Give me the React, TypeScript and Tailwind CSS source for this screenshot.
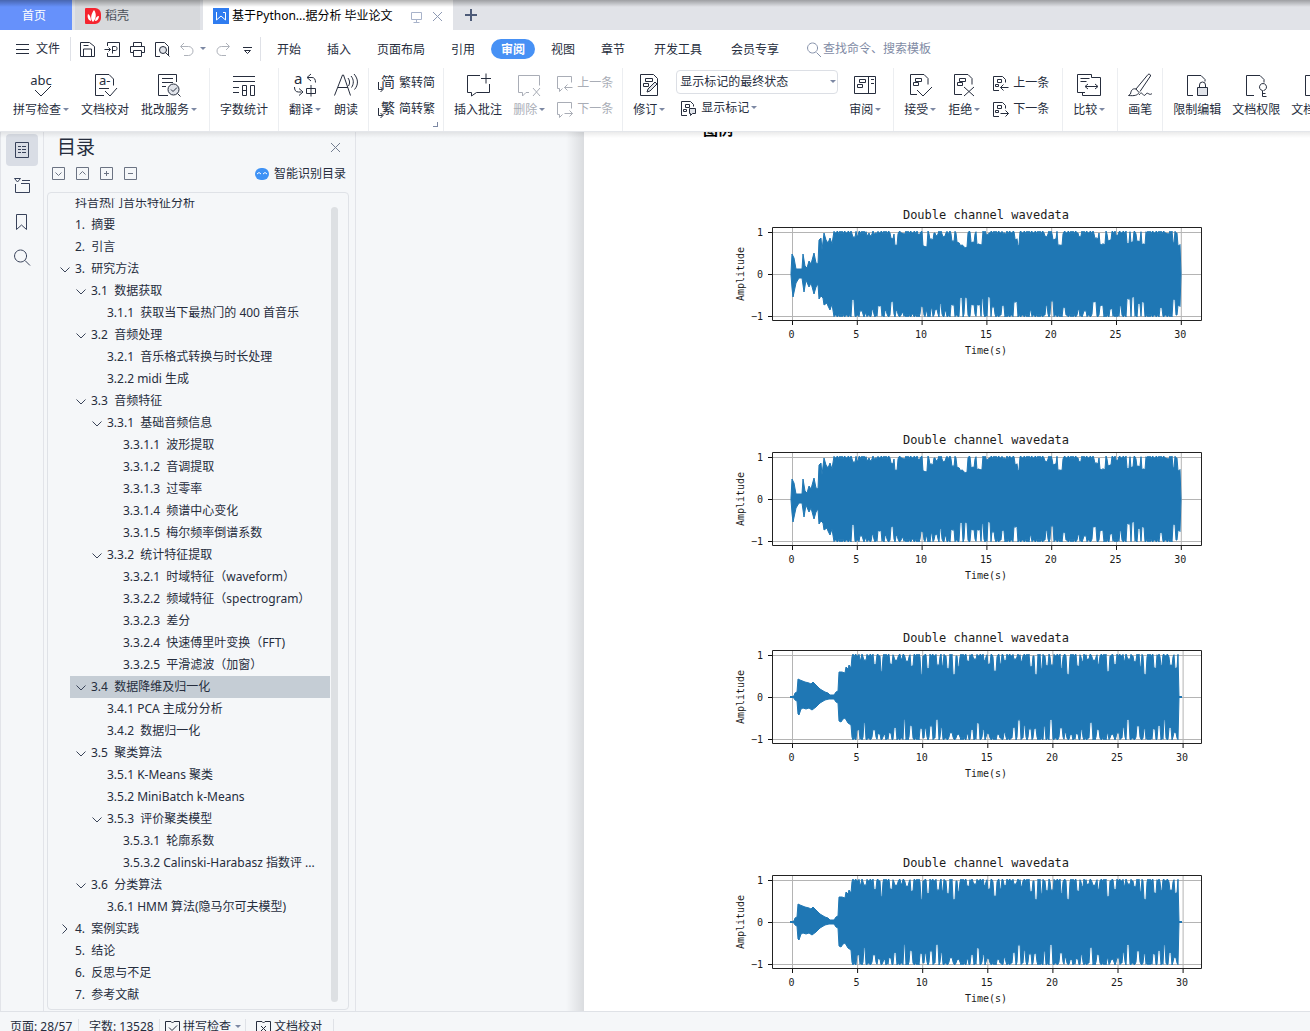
import React, { useState } from 'react';
import clsx from 'clsx';

type IconProps = { name: string; size?: string };

const ICONS: Record<string, React.ReactNode> = {
  spell: (
    <>
      <text x="12" y="12" textAnchor="middle" fontSize="13" fill="currentColor" stroke="none">abc</text>
      <path d="M6 17l6 6 10-10" />
    </>
  ),
  proof: (
    <>
      <path d="M11 22.5H2.5V1.5H16l4.500 4.500v6.500M6 15.500h10M12 18l5 5 7-8" />
      <text x="6" y="12" fontSize="13" fill="currentColor" stroke="none">a-</text>
    </>
  ),
  grade: (
    <>
      <path d="M11 22.500H1.500V1.500h18V9M5 5.500h11M5 9.500h11M5 13.500h4" />
      <circle cx="16.500" cy="16.500" r="5.500" fill="#e1e4ea" />
      <path d="M14 16.500l2 2 4-4M20.500 20.500l3 3" />
    </>
  ),
  count: <path d="M1 3.500h22M1 8.500h22M1 14.500h6M1 19.500h6M10.500 12.500h4v10h-4zM10.500 17.500h4M18.500 12.500h4v10h-4z" />,
  translate: (
    <>
      <text x="1" y="11" fontSize="15" fill="currentColor" stroke="none">a</text>
      <path d="M18 1l-4 3.500 4 3.500M14.500 4.500H19c2.500 0 3.500 2 3.500 5M1.500 14c0 3 1 5 4 5h3M6 15.500l4 3.500-4 3.500M13.500 15.500h9v5h-9zM18 12v11.500" />
    </>
  ),
  read: <path d="M.500 22.500L8.500 2h1l7 20.500M4 14.500h10M14 5c2 2.500 2 5.500.500 8M17 3c3 3.500 3 8 .500 11.500M20 1c4.500 5 4.500 11 .500 15.500" />,
  addNote: <path d="M14 2.500H1.500v17h4V23l5-3.500h13V11M20 .500v10M15 5.500h10" />,
  delNote: <path d="M12 19.500H9L5.500 23v-3.500h-4v-17h21v10M16 15l7 8M23 15l-7 8" />,
  revise: (
    <>
      <path d="M3.500 1.500h13l4 4v17h-17zM8.500 5.500h7v3h-7zM6.500 10.500h5v3h-5z" />
      <path d="M10 19l1-3 7-7 2 2-7 7z" fill="#e1e4ea" />
    </>
  ),
  pane: <path d="M1.500 3.500h21v17h-21zM15.500 3.500v17M6.500 6.500h6v3h-6zM4.500 11.500h5v3h-5zM18 6.500h3M18 10.500h3" />,
  accept: <path d="M9 21.500H2.500v-20H16l4 4v6M7.500 5.500h6v3h-6zM5.500 9.500h5v3h-5zM9 17l6 6 9-9" />,
  reject: <path d="M10 21.500H2.500v-20H16l4 4v6M7.500 5.500h6v3h-6zM5.500 9.500h5v3h-5zM12 14l10 9M22 14l-10 9" />,
  compare: <path d="M8 19.500H.500v-18h14v3M5.500 22.500v-3M14.500 4.500h9v18h-18M3.500 5.500h9M3.500 8.500h6M8.500 13.500h12M11 11l-3 2.500 3 2.500M18 11l3 2.500-3 2.500" />,
  brush: <path d="M8 16L20 1.500c1-1 3 0 2.500 1.500L12 18.500M8 16c-4-1-5 2-5.500 5L.500 22.500c6 .500 9 0 10.500-3zM11 22c2-3 3-2 4-.500s2 1 3-.500 2-.500 3 0 2 .500 3-.500" />,
  restrict: (
    <>
      <path d="M8 22.500H2.500v-20H16l4 4v2M14.500 14.500v-2.500a3 3 0 0 1 6 0v2.500" />
      <path d="M12.500 14.500h10v8h-10z" fill="#e1e4ea" />
    </>
  ),
  rights: <path d="M10 22.500H2.500v-20H16l4 4v3M18.500 17.500a3.500 3.500 0 1 1 1 0M18.500 17.500v6M18.500 20.500h3M18.500 23.500h4" />,
  toSimple: (
    <>
      <text x="10" y="12" textAnchor="middle" fontSize="14" fill="currentColor" stroke="none">简</text>
      <path d="M.500 7v7.500h4M2.500 12l2.500 2.500L2.500 17" />
    </>
  ),
  toTrad: (
    <>
      <text x="10" y="12" textAnchor="middle" fontSize="14" fill="currentColor" stroke="none">繁</text>
      <path d="M.500 7v7.500h4M2.500 12l2.500 2.500L2.500 17" />
    </>
  ),
  prevNote: <path d="M1.500 1.500h14v6M1.500 1.500v12h2v3l3-3M8.500 12.500h8M11.500 9.500l-3 3 3 3" />,
  nextNote: <path d="M1.500 1.500h14v6M1.500 1.500v12h2v3l3-3M8.500 12.500h8M13.500 9.500l3 3-3 3" />,
  prevEdit: <path d="M7 15.500H1.500v-14h9l3 3v3M5.500 4.500h4v3h-4zM3.500 9.500h3v2h-3zM8.500 12.500h8M11.500 9.500l-3 3 3 3" />,
  nextEdit: <path d="M7 15.500H1.500v-14h9l3 3v3M5.500 4.500h4v3h-4zM3.500 9.500h3v2h-3zM8.500 12.500h8M13.500 9.500l3 3-3 3" />,
  markup: (
    <>
      <path d="M7 15.500H1.500v-14h9l3 3v2M5.500 4.500h4v3h-4zM3.500 9.500h3v2h-3z" />
      <path d="M9.500 8.500h6v5h-3l-2 2v-2h-1z" fill="#e1e4ea" />
    </>
  ),
  save: <path d="M1.500 1.500h9l5 4v10h-14zM4.500 15v-7h8v7M4.500 4.500h5" />,
  pdf: <path d="M3.500 5V1.500h12v14h-12V12M.500 8.500h6M4.500 6.500l2 2-2 2M8.500 12.500v-7h3c2 0 2 4 0 4H8" />,
  print: <path d="M4.500 5.500v-4h8v4M4.500 11.500h-3v-6h14v6h-3M4.500 9.500h8v6h-8z" />,
  preview: (
    <>
      <path d="M6 15.500H1.500v-14h9l4 4v9" />
      <circle cx="9" cy="9" r="3.500" fill="#e1e4ea" />
      <path d="M11.500 11.500l4 4" />
    </>
  ),
  undo: <path d="M5 2L1.500 5.500 5 9M2 5.500h7.500a4.500 4.500 0 0 1 0 9H5" />,
  redo: <path d="M12 2l3.500 3.500L12 9M15 5.500H7.500a4.500 4.500 0 0 0 0 9H12" />,
  more: <path d="M4 6.500h9M5.500 9.500h6l-3 3z" />,
  menu: <path d="M2 3.500h13M2 8.500h13M2 12.500h13" />,
  search: <path d="M7.500 2a5 5 0 1 0 .100 0M11.500 11.500l4.500 4.500" />,
  outline: <path d="M1.500 .500h13v15h-13zM4 4.500h3M8 4.500h4M4 7.500h3M8 7.500h4M4 10.500h3M8 10.500h4" />,
  chapter: <path d="M.500 .500h6l-3 3.500zM8 2.500h8M1.500 6v8.500h14v-9H7" />,
  bookmark: <path d="M2.500 .500h10v15l-5-4.500-5 4.500z" />,
  find: <path d="M6.500 0a6 6 0 1 0 .100 0M11 10.500l5 5" />,
  close: <path d="M4 4l9 9M13 4l-9 9" />,
  screen: <path d="M3.500 4.500h10v7h-10zM8.500 12v2M5.500 14.500h6" />,
  collapse: <path d="M2.500 1.500h12v12h-12zM5.500 6.500l3 3 3-3" />,
  expand: <path d="M2.500 1.500h12v12h-12zM5.500 8.500l3-3 3 3" />,
  plus: <path d="M2.500 1.500h12v12h-12zM6 7.500h5M8.500 5v5" />,
  minus: <path d="M2.500 1.500h12v12h-12zM6 7.500h5" />,
  checkBook: <path d="M7 2.500H1.500v13h14v-13H10l-1.500 1.500zM5 8.500l3 3 5-5" />,
  crossBook: <path d="M7 2.500H1.500v13h14v-13H10l-1.500 1.500zM6 7l5 5M11 7l-5 5" />,
};

function Icon({ name, size = 'w-6 h-6' }: IconProps) {
  const box = size === 'w-6 h-6' ? '0 0 24 24' : '0 0 17 17';
  return (
    <svg viewBox={box} className={clsx('shrink-0 overflow-visible', size)} fill="none" stroke="currentColor" strokeWidth="1" aria-hidden="true">
      {ICONS[name]}
    </svg>
  );
}

function Caret() {
  return (
    <svg viewBox="0 0 8 8" className="w-2 h-2 shrink-0" aria-hidden="true">
      <path d="M2 2h6L5 5z" fill="#7c88a3" />
    </svg>
  );
}

function BigButton({ icon, label, caret, disabled }: { icon: string; label: string; caret?: boolean; disabled?: boolean }) {
  return (
    <button type="button" disabled={disabled} className={clsx('flex flex-col items-center gap-[5px] pt-[5px] shrink-0', disabled && 'text-[#a9adb6]')}>
      <Icon name={icon} />
      <span className="flex items-center leading-4 whitespace-nowrap">
        {label}
        {caret && <Caret />}
      </span>
    </button>
  );
}

function SmallButton({ icon, label, caret, disabled }: { icon: string; label: string; caret?: boolean; disabled?: boolean }) {
  return (
    <button type="button" disabled={disabled} className={clsx('flex items-center gap-1 h-[18px] whitespace-nowrap', disabled && 'text-[#a9adb6]')}>
      <Icon name={icon} size="w-[17px] h-[17px]" />
      <span className="flex items-center">
        {label}
        {caret && <Caret />}
      </span>
    </button>
  );
}

function Group({ children, className = 'px-2.5 gap-[11px]' }: { children: React.ReactNode; className?: string }) {
  return <div className={clsx('relative flex shrink-0 border-r border-[#eceef1]', className)}>{children}</div>;
}

function TabBar() {
  return (
    <header className="relative flex h-[30px] shrink-0 bg-[#e1e3e8]">
      <button type="button" className="w-[72px] pr-1 pt-px bg-[#6691fb] text-white">首页</button>
      <div className="flex w-[131px] px-[3px]">
        <button type="button" className="flex flex-1 items-center gap-1 pl-[10px] pt-0.5 bg-[#d7d9dc] text-[#4a4f58]">
          <svg viewBox="0 0 16 16" className="w-4 h-4" aria-hidden="true">
            <path d="M1 0h9a6 6 0 0 1 6 6v4a6 6 0 0 1-6 6H1a1 1 0 0 1-1-1V1a1 1 0 0 1 1-1z" fill="#f5242f" />
            <path d="M8 14C5 11 6 6 9 2c3 4 2 9-1 12zM6 13C3 12 2 9 3 6c2 1 3 4 3 7zM10 13c0-3 2-5 4-5 0 3-2 5-4 5z" fill="#fff" />
          </svg>
          稻壳
        </button>
      </div>
      <div className="flex w-[250px] items-center bg-white pl-[10px] pt-0.5">
        <svg viewBox="0 0 16 16" className="w-4 h-4 mr-[3px] shrink-0" aria-hidden="true">
          <path d="M0 0h16v16H0z" fill="#2f7cf0" />
          <path d="M3.500 4v8l4.500-4 4.500 4V4.500H10" fill="none" stroke="#fff" strokeWidth="1" />
        </svg>
        <span className="w-[176px] text-black whitespace-nowrap">基于Python...据分析 毕业论文</span>
        <button type="button" aria-label="窗口" className="mr-1 text-[#a8b3ca]"><Icon name="screen" size="w-[17px] h-[17px]" /></button>
        <button type="button" aria-label="关闭" className="text-[#8d99b3]"><Icon name="close" size="w-[17px] h-[17px]" /></button>
      </div>
      <button type="button" aria-label="新建" className="w-9 flex items-center justify-center">
        <svg viewBox="0 0 12 12" className="w-3 h-3" aria-hidden="true"><path d="M6 0v12M0 6h12" stroke="#4d5b78" strokeWidth="2" /></svg>
      </button>
      <div className="absolute inset-x-0 top-0 h-[7px] bg-linear-to-b from-black/30 to-transparent" />
    </header>
  );
}

const MENUS = [
  { label: '开始', className: 'w-[50px]' },
  { label: '插入', className: 'w-[50px]' },
  { label: '页面布局', className: 'w-[74px]' },
  { label: '引用', className: 'w-[50px]' },
  { label: '审阅', className: 'w-11 mx-[3px]' },
  { label: '视图', className: 'w-[50px]' },
  { label: '章节', className: 'w-[50px]' },
  { label: '开发工具', className: 'w-20' },
  { label: '会员专享', className: 'w-[74px]' },
];

function MenuBar() {
  const [active, setActive] = useState('审阅');
  return (
    <nav className="flex h-[38px] shrink-0 items-center pl-[14px]">
      <button type="button" className="flex items-center gap-[5px] w-[56px]">
        <Icon name="menu" size="w-[17px] h-[17px]" />文件
      </button>
      <div className="flex h-6 items-center gap-2 border-l border-[#dfe1e7] pl-2">
        {['save', 'pdf', 'print', 'preview'].map((name) => (
          <button key={name} type="button" aria-label={name}><Icon name={name} size="w-[17px] h-[17px]" /></button>
        ))}
        <button type="button" aria-label="undo" className="flex items-center gap-[2px] text-[#aeb2ba]">
          <Icon name="undo" size="w-[17px] h-[17px]" /><Caret />
        </button>
        <button type="button" aria-label="redo" className="text-[#aeb2ba]"><Icon name="redo" size="w-[17px] h-[17px]" /></button>
        <button type="button" aria-label="more"><Icon name="more" size="w-[17px] h-[17px]" /></button>
      </div>
      <div className="ml-1 flex h-6 items-center border-l border-[#dfe1e7] pl-[3px]">
        {MENUS.map((menu) => (
          <button
            key={menu.label}
            type="button"
            onClick={() => setActive(menu.label)}
            className={clsx('h-5 pt-0.5 shrink-0 rounded-full whitespace-nowrap', menu.className, active === menu.label && 'bg-[#4791f5] font-bold text-white')}
          >
            {menu.label}
          </button>
        ))}
      </div>
      <label className="ml-[13px] flex items-center gap-px text-[#8591aa]">
        <Icon name="search" size="w-[17px] h-[17px]" />
        <input type="text" aria-label="查找" placeholder="查找命令、搜索模板" className="w-[120px] outline-none placeholder-[#7f8ba5]" />
      </label>
    </nav>
  );
}

function Ribbon() {
  return (
    <div className="relative z-10 flex h-16 shrink-0 overflow-hidden border-b border-[#e4e6ea] bg-white">
      <Group className="pl-[13px] pr-3 gap-3">
        <BigButton icon="spell" label="拼写检查" caret />
        <BigButton icon="proof" label="文档校对" />
        <BigButton icon="grade" label="批改服务" caret />
      </Group>
      <Group><BigButton icon="count" label="字数统计" /></Group>
      <Group className="px-2.5 gap-[13px]">
        <BigButton icon="translate" label="翻译" caret />
        <BigButton icon="read" label="朗读" />
      </Group>
      <Group className="pl-[9px] pr-2">
        <div className="flex flex-col gap-2 pt-[6px]">
          <SmallButton icon="toSimple" label="繁转简" />
          <SmallButton icon="toTrad" label="简转繁" />
        </div>
        <span className="absolute right-[5px] bottom-1 h-[5px] w-[5px] border-r border-b border-[#7c88a3]" />
      </Group>
      <Group className="pl-2.5 pr-[9px] gap-[11px]">
        <BigButton icon="addNote" label="插入批注" />
        <BigButton icon="delNote" label="删除" caret disabled />
        <div className="flex flex-col gap-2 pt-[6px]">
          <SmallButton icon="prevNote" label="上一条" disabled />
          <SmallButton icon="nextNote" label="下一条" disabled />
        </div>
      </Group>
      <Group className="pl-2.5 pr-3 gap-[11px]">
        <BigButton icon="revise" label="修订" caret />
        <div className="flex w-[162px] flex-col gap-[5px] pt-[2px]">
          <div className="relative">
            <select aria-label="标记状态" className="h-6 w-full appearance-none rounded-sm border border-[#dcdfe5] bg-white px-[3px]">
              <option>显示标记的最终状态</option>
              <option>最终状态</option>
              <option>显示标记的原始状态</option>
              <option>原始状态</option>
            </select>
            <span className="pointer-events-none absolute right-[2px] top-2"><Caret /></span>
          </div>
          <div className="pl-1"><SmallButton icon="markup" label="显示标记" caret /></div>
        </div>
        <BigButton icon="pane" label="审阅" caret />
      </Group>
      <Group className="pl-2.5 pr-[13px] gap-3">
        <BigButton icon="accept" label="接受" caret />
        <BigButton icon="reject" label="拒绝" caret />
        <div className="flex flex-col gap-2 pt-[6px]">
          <SmallButton icon="prevEdit" label="上一条" />
          <SmallButton icon="nextEdit" label="下一条" />
        </div>
      </Group>
      <Group className="pl-2.5 pr-3"><BigButton icon="compare" label="比较" caret /></Group>
      <Group><BigButton icon="brush" label="画笔" /></Group>
      <div className="flex shrink-0 gap-[11px] pl-2.5">
        <BigButton icon="restrict" label="限制编辑" />
        <BigButton icon="rights" label="文档权限" />
        <BigButton icon="restrict" label="文档认证" />
      </div>
    </div>
  );
}

type Heading = { level: number; text: string; open?: boolean; closed?: boolean };

const HEADINGS: Heading[] = [
  { level: 0, text: '抖音热门音乐特征分析' },
  { level: 0, text: '1.  摘要' },
  { level: 0, text: '2.  引言' },
  { level: 0, text: '3.  研究方法', open: true },
  { level: 1, text: '3.1  数据获取', open: true },
  { level: 2, text: '3.1.1  获取当下最热门的 400 首音乐' },
  { level: 1, text: '3.2  音频处理', open: true },
  { level: 2, text: '3.2.1  音乐格式转换与时长处理' },
  { level: 2, text: '3.2.2 midi 生成' },
  { level: 1, text: '3.3  音频特征', open: true },
  { level: 2, text: '3.3.1  基础音频信息', open: true },
  { level: 3, text: '3.3.1.1  波形提取' },
  { level: 3, text: '3.3.1.2  音调提取' },
  { level: 3, text: '3.3.1.3  过零率' },
  { level: 3, text: '3.3.1.4  频谱中心变化' },
  { level: 3, text: '3.3.1.5  梅尔频率倒谱系数' },
  { level: 2, text: '3.3.2  统计特征提取', open: true },
  { level: 3, text: '3.3.2.1  时域特征（waveform）' },
  { level: 3, text: '3.3.2.2  频域特征（spectrogram）' },
  { level: 3, text: '3.3.2.3  差分' },
  { level: 3, text: '3.3.2.4  快速傅里叶变换（FFT)' },
  { level: 3, text: '3.3.2.5  平滑滤波（加窗）' },
  { level: 1, text: '3.4  数据降维及归一化', open: true },
  { level: 2, text: '3.4.1 PCA 主成分分析' },
  { level: 2, text: '3.4.2  数据归一化' },
  { level: 1, text: '3.5  聚类算法', open: true },
  { level: 2, text: '3.5.1 K-Means 聚类' },
  { level: 2, text: '3.5.2 MiniBatch k-Means' },
  { level: 2, text: '3.5.3  评价聚类模型', open: true },
  { level: 3, text: '3.5.3.1  轮廓系数' },
  { level: 3, text: '3.5.3.2 Calinski-Harabasz 指数评 ...' },
  { level: 1, text: '3.6  分类算法', open: true },
  { level: 2, text: '3.6.1 HMM 算法(隐马尔可夫模型)' },
  { level: 0, text: '4.  案例实践', closed: true },
  { level: 0, text: '5.  结论' },
  { level: 0, text: '6.  反思与不足' },
  { level: 0, text: '7.  参考文献' },
];

const INDENT = ['pl-0', 'pl-4', 'pl-8', 'pl-12'];

function OutlineTree() {
  const [selected, setSelected] = useState(22);
  return (
    <ul className="-mt-[6px] min-w-0 flex-1 pl-[22px]">
      {HEADINGS.map((heading, index) => (
        <li key={heading.text}>
          <button
            type="button"
            onClick={() => setSelected(index)}
            className={clsx('flex h-[22px] w-full items-center text-left whitespace-pre', selected === index && 'bg-[#c5cdd5]')}
          >
            <span className={clsx('-ml-[11px] flex', INDENT[heading.level])}>
              <svg viewBox="0 0 10 10" className="mr-[6px] w-[10px] h-[10px] self-center shrink-0 overflow-visible" fill="none" stroke="#3a4459" aria-hidden="true">
                {heading.open && <path d="M1.500 3.500L6 8l4.500-4.500" />}
                {heading.closed && <path d="M3.500 .500L8 5l-4.500 4.500" />}
              </svg>
              {heading.text}
            </span>
          </button>
        </li>
      ))}
    </ul>
  );
}

function Sidebar() {
  return (
    <aside className="flex w-[356px] shrink-0 border-r border-[#e2e4e9]">
      <div className="flex w-11 flex-col items-center gap-1 border-x border-[#e2e4e9] pt-[2px] text-[#38425a]">
        {['outline', 'chapter', 'bookmark', 'find'].map((name, index) => (
          <button
            key={name}
            type="button"
            aria-label={name}
            className={clsx('flex h-8 w-8 items-center justify-center rounded-sm', index === 0 && 'bg-[#d9dde5]')}
          >
            <Icon name={name} size="w-[17px] h-[17px]" />
          </button>
        ))}
      </div>
      <section className="flex min-w-0 flex-1 flex-col pl-[3px] pr-[6px]">
        <div className="flex items-center justify-between pl-[10px] pr-[5px] h-[30px]">
          <h2 className="text-[19px] leading-6">目录</h2>
          <button type="button" aria-label="关闭" className="text-[#737d90]"><Icon name="close" size="w-[17px] h-[17px]" /></button>
        </div>
        <div className="flex items-center gap-[7px] pl-[3px] pr-[3px] h-6 mb-[6px] text-[#6b7383]">
          {['collapse', 'expand', 'plus', 'minus'].map((name) => (
            <button key={name} type="button" aria-label={name}><Icon name={name} size="w-[17px] h-[17px]" /></button>
          ))}
          <button type="button" className="ml-auto flex items-center gap-1 text-[#262d3d]">
            <svg viewBox="0 0 16 14" className="w-4 h-[14px]" aria-hidden="true">
              <rect x="1" y="1" width="14" height="12" rx="6" fill="#3f92f5" />
              <path d="M3 7l2-1.500L7 7M9 7l2-1.500L13 7" fill="none" stroke="#fff" />
            </svg>
            智能识别目录
          </button>
        </div>
        <div className="mb-[1px] flex min-h-0 flex-1 rounded-sm border border-[#dfe2e7] pt-[5px] pr-[10px]">
          <div className="flex min-h-0 flex-1 overflow-hidden">
            <OutlineTree />
          </div>
          <div className="ml-[1px] mt-[9px] mb-[7px] w-[7px] rounded-full bg-[#dde0e3]" />
        </div>
      </section>
    </aside>
  );
}

type Point = [number, number];

// Envelopes in plot pixels: x position and half height around the zero line
const INTRO_A_TOP: Point[] = [[61, 1], [62, 20], [64, 16], [66, 5], [72, 5], [73, 20], [75, 8], [77, 6], [79, 13], [81, 10], [84, 21], [86, 11], [88, 10], [89, 34], [91, 36], [92, 24], [94, 41], [96, 34], [98, 31], [100, 36], [102, 30]];
const INTRO_A_BOTTOM: Point[] = [[61, 1], [62, 14], [63, 23], [66, 9], [69, 4], [72, 4], [74, 18], [76, 6], [79, 13], [81, 9], [84, 20], [86, 13], [88, 10], [89, 25], [91, 22], [93, 24], [94, 31], [97, 29], [98, 32], [100, 36], [102, 30]];
const INTRO_B_TOP: Point[] = [[61, 0], [64, 1], [65, 4], [67, 5], [68, 18], [70, 17], [75, 15], [79, 14], [81, 13], [83, 15], [86, 12], [90, 8], [95, 5], [98, 4], [100, 2], [104, 2], [106, 5], [108, 6], [109, 25], [112, 25], [115, 24], [116, 30], [118, 28], [119, 32], [121, 29]];
const INTRO_B_BOTTOM: Point[] = [[61, 0], [64, 1], [65, 3], [67, 4], [68, 17], [69, 18], [71, 12], [73, 11], [76, 12], [79, 11], [82, 13], [86, 10], [90, 6], [95, 3], [99, 2], [104, 2], [106, 5], [108, 6], [109, 24], [111, 25], [113, 22], [115, 21], [118, 26], [121, 28]];

// Notches cut into the loud part: x position, width and level
const NOTCHES_A_TOP: [number, number, number][] = [
  [123, 3, 36], [127, 2, 37], [137, 2, 38], [140, 2, 38], [145, 3, 40], [161, 3, 35], [165, 3, 28], [172, 3, 40], [188, 3, 39],
  [193, 5, 27], [200, 4, 34], [206, 2, 38], [213, 3, 37], [218, 2, 40], [222, 3, 32], [227, 3, 31], [230, 4, 28], [234, 4, 26],
  [241, 4, 31], [247, 6, 29], [256, 3, 39], [273, 3, 40], [285, 3, 34], [287, 3, 28], [315, 3, 37], [323, 4, 34], [328, 5, 28],
  [349, 3, 37], [365, 4, 35], [370, 6, 29], [378, 4, 33], [386, 3, 38], [397, 3, 30], [401, 3, 31], [407, 4, 32], [412, 4, 29],
  [436, 3, 40], [443, 2, 31], [448, 3, 28],
];
const NOTCHES_A_BOTTOM: [number, number, number][] = [
  [122, 3, 25], [130, 3, 36], [135, 2, 39], [142, 2, 35], [148, 4, 31], [155, 2, 36], [161, 3, 27], [166, 2, 36], [172, 2, 38],
  [182, 2, 39], [191, 3, 32], [196, 2, 37], [201, 2, 34], [205, 3, 35], [210, 2, 29], [215, 2, 36], [221, 4, 30], [230, 3, 23],
  [235, 3, 23], [241, 4, 30], [247, 4, 30], [252, 2, 24], [258, 3, 22], [262, 3, 32], [272, 3, 31], [284, 4, 27], [300, 2, 36],
  [316, 2, 31], [321, 3, 26], [333, 3, 33], [348, 2, 35], [354, 3, 36], [363, 4, 27], [370, 4, 31], [380, 3, 34], [390, 2, 31],
  [397, 4, 24], [402, 3, 22], [408, 3, 29], [412, 3, 27], [430, 3, 33], [443, 3, 25], [448, 3, 31],
];

function notchesEvery(from: number, to: number, gap: number, seed: number): [number, number, number][] {
  const list: [number, number, number][] = [];
  for (let x = from, i = seed; x < to; i += 1) {
    const width = 2 + ((i * i) % 3);
    list.push([x, width, 22 + ((i * i * 7 + i) % 17)]);
    x += width + gap + ((i * i * 3 + i * 5) % 7);
  }
  return list;
}

const NOTCHES_B_TOP = notchesEvery(130, 446, 2, 3);
const NOTCHES_B_BOTTOM = notchesEvery(127, 446, 2, 5);

function bodyPoints(from: number, to: number, notches: [number, number, number][]): Point[] {
  const points: Point[] = [];
  for (let x = from; x < to; x += 1) {
    const notch = notches.find(([at, width]) => x >= at && x < at + width);
    const ripple = ((x * x * 3 + x * 5) % 11) / 3;
    points.push([x, notch ? notch[2] + ripple / 2 : 43 - ripple]);
  }
  return points;
}

function wavePath(kind: 'a' | 'b') {
  const zero = 74;
  const isA = kind === 'a';
  const start = isA ? 104 : 122;
  const end = isA ? 451 : 449;
  const top = [...(isA ? INTRO_A_TOP : INTRO_B_TOP), ...bodyPoints(start, end, isA ? NOTCHES_A_TOP : NOTCHES_B_TOP)];
  const bottom = [...(isA ? INTRO_A_BOTTOM : INTRO_B_BOTTOM), ...bodyPoints(start, end, isA ? NOTCHES_A_BOTTOM : NOTCHES_B_BOTTOM)];
  const upper = top.map(([x, v]) => `${x} ${(zero - v).toFixed(1)}`);
  const lower = bottom.reverse().map(([x, v]) => `${x} ${(zero + v).toFixed(1)}`);
  return `M${upper.join('L')}L${end} ${zero}L${lower.join('L')}Z`;
}

function WaveChart({ kind }: { kind: 'a' | 'b' }) {
  const step = kind === 'a' ? 64.8 : 65.1;
  return (
    <svg viewBox="0 0 480 165" className="block h-[165px] w-[480px] font-['DejaVu_Sans_Mono',monospace]" fontSize="10" fill="#1c1c1c" role="img" aria-label="Double channel wavedata">
      <text x="256" y="19" fontSize="12" textAnchor="middle">Double channel wavedata</text>
      {[0, 1, 2, 3, 4, 5, 6].map((i) => (
        <g key={i}>
          <path d={`M${62.5 + i * step} 28V121`} stroke="#b4b4b4" />
          <path d={`M${62.5 + i * step} 121v4`} stroke="#111" />
          <text x={61.5 + i * step} y="138" textAnchor="middle">{i * 5}</text>
        </g>
      ))}
      {[1, 0, -1].map((v) => (
        <g key={v}>
          <path d={`M43 ${74.5 - v * 42}H471`} stroke="#b4b4b4" />
          <path d={`M38 ${74.5 - v * 42}h4`} stroke="#111" />
          <text x="33" y={78 - v * 42} textAnchor="end">{v === -1 ? '−1' : v}</text>
        </g>
      ))}
      <path d={wavePath(kind)} fill="#1f77b4" stroke="#1f77b4" strokeLinejoin="round" />
      {kind === 'b' && <path d="M60 74h6M448 74h4" stroke="#1f77b4" strokeWidth="2" />}
      <path d="M42.500 27.500h429v93h-429z" fill="none" stroke="#222" />
      <text x="256" y="154" textAnchor="middle">Time(s)</text>
      <text transform="translate(14 74) rotate(-90)" textAnchor="middle">Amplitude</text>
    </svg>
  );
}

function Document() {
  return (
    <main className="flex min-w-0 flex-1 overflow-hidden">
      <div className="flex w-[228px] shrink-0 justify-end">
        <div className="w-[18px] bg-linear-to-r from-transparent to-[#dadcdf]" />
      </div>
      <article className="min-w-0 flex-1 bg-white">
        <p className="-mt-[11px] pl-[119px] text-[15px] leading-4 font-bold text-black">图例</p>
        <div className="flex flex-col pl-[146px] pt-[63px]">
          <WaveChart kind="a" />
          <div className="pt-[60px]"><WaveChart kind="a" /></div>
          <div className="pt-[33px]"><WaveChart kind="b" /></div>
          <div className="pt-[60px]"><WaveChart kind="b" /></div>
        </div>
      </article>
    </main>
  );
}

function StatusBar() {
  return (
    <footer className="flex h-5 shrink-0 items-start overflow-hidden border-t border-[#dfe2e7] pl-[10px] pt-1">
      <div className="flex h-[22px] items-center whitespace-nowrap">
        <span className="w-[69px] border-r border-[#dfe2e7]">页面: 28/57</span>
        <span className="w-[81px] border-r border-[#dfe2e7] pl-[10px]">字数: 13528</span>
        <button type="button" className="flex w-[86px] items-center gap-[2px] border-r border-[#dfe2e7] pl-1">
          <Icon name="checkBook" size="w-[17px] h-[17px]" />拼写检查<Caret />
        </button>
        <button type="button" className="flex w-[88px] items-center gap-[2px] border-r border-[#dfe2e7] pl-[9px]">
          <Icon name="crossBook" size="w-[17px] h-[17px]" />文档校对
        </button>
      </div>
    </footer>
  );
}

export default function App() {
  return (
    <div className="flex h-screen flex-col overflow-hidden bg-white font-['Noto_Sans','Noto_Sans_CJK_SC',sans-serif] text-[12px] leading-4 text-[#262d3d]">
      <TabBar />
      <MenuBar />
      <Ribbon />
      <div className="relative flex min-h-0 flex-1 bg-[#f5f7f9]">
        <Sidebar />
        <Document />
        <div className="pointer-events-none absolute inset-x-0 top-0 h-[6px] bg-linear-to-b from-black/8 to-transparent" />
      </div>
      <div className="shrink-0 bg-[#f5f7f9]">
        <StatusBar />
      </div>
    </div>
  );
}
